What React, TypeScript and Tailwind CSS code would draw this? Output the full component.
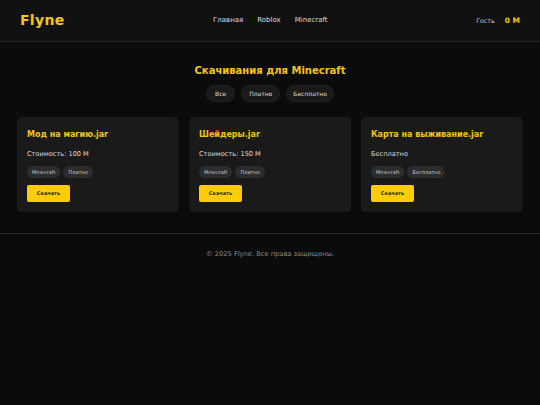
const files = [
  { name: "Мод на магию.jar", price: "Стоимость: 100 M", tag: "Платно" },
  { name: "Шейдеры.jar", price: "Стоимость: 150 M", tag: "Платно" },
  { name: "Карта на выживание.jar", price: "Бесплатно", tag: "Бесплатно" },
]

function Card({ name, price, tag }: { name: string; price: string; tag: string }) {
  return (
    <div className="flex flex-col rounded-[5px] bg-[#1a1a1a] px-[10px] pt-[12px] pb-[10px]">
      <h3 className="text-[8px] leading-[12px] font-bold text-[#f5c518]">{name}</h3>
      <p className="mt-[8px] text-[6.6px] leading-[10px] text-[#dddddd]">{price}</p>
      <div className="mt-[7px] flex gap-[3px]">
        <span className="rounded-full bg-[#2c2c2c] px-[5px] text-[5px] leading-[12px] text-[#cccccc]">Minecraft</span>
        <span className="rounded-full bg-[#2c2c2c] px-[5px] text-[5px] leading-[12px] text-[#cccccc]">{tag}</span>
      </div>
      <button className="mt-[7px] h-[17px] w-[43px] rounded-[2px] bg-[#ffcc00] text-[5px] font-bold text-[#1a1a1a]">
        Скачать
      </button>
    </div>
  )
}

export default function App() {
  return (
    <div className="min-h-[405px] bg-[#0b0b0b] font-['DejaVu_Sans',sans-serif] text-white">
      <header className="flex h-[42px] items-center justify-between border-b border-[#262626] bg-[#111111] px-[20px]">
        <div className="text-[14px] font-bold tracking-[0.3px] text-[#f5c518]">Flyne</div>
        <nav className="flex gap-[14px] text-[7px] text-[#dddddd]">
          <a>Главная</a>
          <a>Roblox</a>
          <a>Minecraft</a>
        </nav>
        <div className="flex items-center gap-[10px]">
          <span className="text-[6.3px] text-[#cccccc]">Гость</span>
          <span className="text-[7.5px] font-bold text-[#f5c518]">0 M</span>
        </div>
      </header>

      <main className="px-[17px] pt-[22px] pb-[21px]">
        <h1 className="text-center text-[10px] leading-[14px] font-bold text-[#f5c518]">Скачивания для Minecraft</h1>
        <div className="mt-[7px] flex justify-center gap-[6px]">
          <button className="h-[17px] rounded-full border border-[#222] bg-[#1a1a1a] px-[8px] text-[6px] text-[#dddddd]">Все</button>
          <button className="h-[17px] rounded-full border border-[#222] bg-[#1a1a1a] px-[7px] text-[6px] text-[#dddddd]">Платно</button>
          <button className="h-[17px] rounded-full border border-[#222] bg-[#1a1a1a] px-[6px] text-[6px] text-[#dddddd]">Бесплатно</button>
        </div>
        <div className="mt-[15px] grid grid-cols-3 gap-[10px]">
          {files.map((f) => (
            <Card key={f.name} {...f} />
          ))}
        </div>
      </main>

      <footer className="border-t border-[#262626] pt-[15px] text-center text-[6.7px] leading-[10px] text-[#888888]">
        © 2025 Flyne. Все права защищены.
      </footer>
    </div>
  )
}
